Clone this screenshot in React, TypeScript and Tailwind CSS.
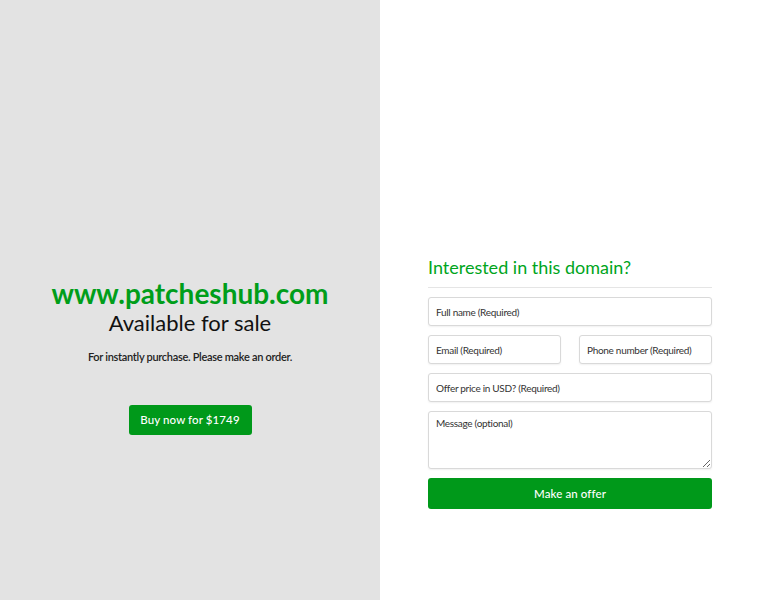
export default function App() {
  const inputCls =
    "h-[29px] w-full rounded-[3px] border border-[#d9d9d9] bg-white px-[7px] text-[10px] tracking-[-0.3px] text-[#333] placeholder:text-[#333] outline-none shadow-[0_1px_2px_rgba(0,0,0,0.06)]"

  return (
    <div className="flex h-[600px] w-full font-['Lato',sans-serif]">
      <div className="flex w-[380px] flex-col items-center bg-[#e3e3e3] pt-[276px]">
        <h1 className="text-[28px] font-bold leading-[34px] text-[#009e1a]">www.patcheshub.com</h1>
        <h2 className="text-[22px] leading-[25px] text-[#111]">Available for sale</h2>
        <p className="mt-[15px] text-[11px] leading-[14px] font-semibold tracking-[-0.3px] text-[#222]">
          For instantly purchase. Please make an order.
        </p>
        <button className="mt-[41px] h-[30px] w-[123px] rounded-[3px] bg-[#00991a] text-[11.5px] font-medium tracking-[0.1px] text-white">
          Buy now for $1749
        </button>
      </div>

      <div className="flex w-[380px] flex-col bg-white px-12 pt-[254px]">
        <h3 className="text-[18px] leading-[26px] text-[#00a51c]">Interested in this domain?</h3>
        <div className="mt-[7px] h-px bg-[#e5e5e5]" />
        <form className="mt-[9px] flex flex-col gap-[9px]" onSubmit={(e) => e.preventDefault()}>
          <input className={inputCls} placeholder="Full name (Required)" />
          <div className="flex gap-[18px]">
            <input className={inputCls} placeholder="Email (Required)" />
            <input className={inputCls} placeholder="Phone number (Required)" />
          </div>
          <input className={inputCls} placeholder="Offer price in USD? (Required)" />
          <textarea
            className="h-[58px] w-full rounded-[3px] border border-[#d9d9d9] bg-white px-[7px] pt-[4px] text-[10px] tracking-[-0.3px] text-[#333] placeholder:text-[#333] outline-none shadow-[0_1px_2px_rgba(0,0,0,0.06)]"
            placeholder="Message (optional)"
          />
          <button className="h-[31px] w-full rounded-[3px] bg-[#00991a] text-[11.5px] font-medium tracking-[0.1px] text-white">
            Make an offer
          </button>
        </form>
      </div>
    </div>
  )
}
